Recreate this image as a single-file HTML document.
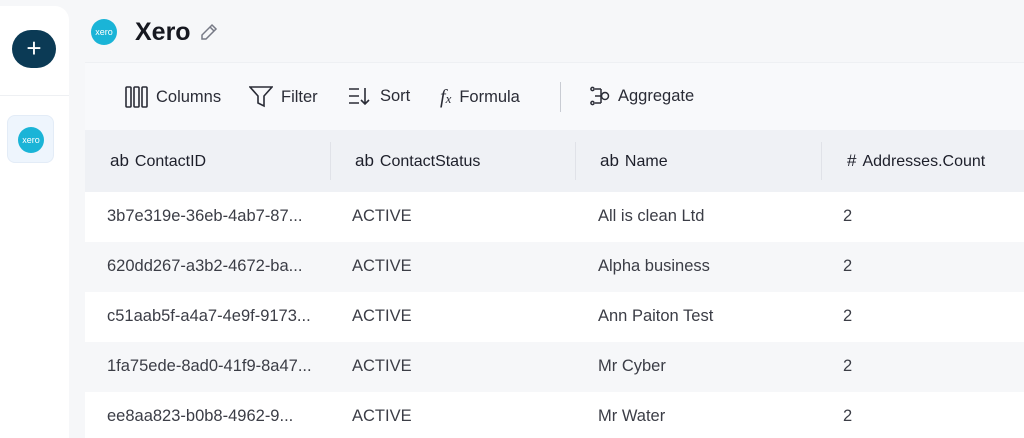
<!DOCTYPE html>
<html><head><meta charset="utf-8"><style>
*{margin:0;padding:0;box-sizing:border-box}
html,body{width:1024px;height:438px;overflow:hidden}
body{background:#f6f7f9;font-family:"Liberation Sans",sans-serif;position:relative;color:#1d1f2a}
.side{position:absolute;left:0;top:6px;width:69px;height:440px;background:#fff;border-radius:0 14px 0 0}
.plus{position:absolute;left:12px;top:24px;width:44px;height:38px;border-radius:19px;background:#0b3a55;color:#fff;font-size:26px;text-align:center;line-height:36px}
.sep{position:absolute;left:0;top:89px;width:69px;height:1px;background:#eef0f3}
.tile{position:absolute;left:7px;top:109px;width:47px;height:48px;border-radius:8px;background:#eef5fd;border:1px solid #e3ecf7}
.xl{border-radius:50%;background:#1ab4d7;color:#fff;text-align:center;font-size:9px;line-height:26px}
.title{position:absolute;left:135px;top:18px;font-size:25px;font-weight:bold;color:#161820}
.tb{position:absolute;left:85px;top:62px;right:0;height:68px;background:#f8f9fb;border-top:1px solid #eef0f3}
.tbi{position:absolute;top:23px;font-size:16.5px;color:#2a2c36;display:flex;align-items:center;gap:8px}
.hd{position:absolute;left:85px;top:130px;right:0;height:62px;background:#eff1f5}
.hc{position:absolute;top:21px;font-size:16px;color:#1d1f2a}
.hc b{font-weight:normal;font-size:17px;margin-right:6px}
.vl{position:absolute;top:12px;width:1px;height:38px;background:#e0e2e8}
.row{position:absolute;left:85px;right:0;height:50px;font-size:16.5px;color:#3b3d46}
.row span{position:absolute;top:15px}
</style></head><body>
<div class="side"><div class="plus">+</div><div class="sep"></div><div class="tile"><div class="xl" style="position:absolute;left:10px;top:11px;width:26px;height:26px">xero</div></div></div>
<div class="xl" style="position:absolute;left:91px;top:19px;width:26px;height:26px">xero</div>
<div class="title">Xero</div>
<svg style="position:absolute;left:199px;top:22px" width="20" height="20" viewBox="0 0 20 20" fill="none" stroke="#777a86" stroke-width="1.5"><path d="M13 3l4 4L7 17H3v-4z"/><path d="M11 5l4 4"/></svg>
<div class="tb">
<div class="tbi" style="left:40px"><svg width="23" height="22" viewBox="0 0 23 22" fill="none" stroke="#2a2c36" stroke-width="1.6"><rect x="1" y="1" width="5" height="20" rx="1"/><rect x="9" y="1" width="5" height="20" rx="1"/><rect x="17" y="1" width="5" height="20" rx="1"/></svg>Columns</div>
<div class="tbi" style="left:164px"><svg width="24" height="22" viewBox="0 0 24 22" fill="none" stroke="#2a2c36" stroke-width="1.6"><path d="M1 1h22l-8 9v10l-6-3v-7z"/></svg>Filter</div>
<div class="tbi" style="left:263px"><svg width="24" height="20" viewBox="0 0 24 20" fill="none" stroke="#2a2c36" stroke-width="1.6"><path d="M1 3h10M1 10h10M1 17h10M17 2v16M13 14l4 4 4-4"/></svg>Sort</div>
<div class="tbi" style="left:355px"><span style="font-family:'Liberation Serif',serif;font-style:italic;font-size:20px">f<span style="font-size:13px">x</span></span>Formula</div>
<div style="position:absolute;left:475px;top:19px;width:1px;height:30px;background:#c9ccd3"></div>
<div class="tbi" style="left:505px"><svg width="20" height="20" viewBox="0 0 20 20" fill="none" stroke="#2a2c36" stroke-width="1.5"><circle cx="2.5" cy="3" r="1.6"/><circle cx="2.5" cy="17" r="1.6"/><path d="M5 3h6M5 10h7M5 17h6M11 3v14"/><circle cx="15" cy="10" r="3.5"/></svg>Aggregate</div>
</div>
<div class="hd">
<div class="hc" style="left:25px"><b>ab</b>ContactID</div><div class="vl" style="left:245px"></div>
<div class="hc" style="left:270px"><b>ab</b>ContactStatus</div><div class="vl" style="left:490px"></div>
<div class="hc" style="left:515px"><b>ab</b>Name</div><div class="vl" style="left:736px"></div>
<div class="hc" style="left:762px"><b>#</b>Addresses.Count</div>
</div>
<div class="row" style="top:192px;background:#fff"><span style="left:22px">3b7e319e-36eb-4ab7-87...</span><span style="left:267px">ACTIVE</span><span style="left:513px">All is clean Ltd</span><span style="left:758px">2</span></div>
<div class="row" style="top:242px;background:#f6f7f9"><span style="left:22px">620dd267-a3b2-4672-ba...</span><span style="left:267px">ACTIVE</span><span style="left:513px">Alpha business</span><span style="left:758px">2</span></div>
<div class="row" style="top:292px;background:#fff"><span style="left:22px">c51aab5f-a4a7-4e9f-9173...</span><span style="left:267px">ACTIVE</span><span style="left:513px">Ann Paiton Test</span><span style="left:758px">2</span></div>
<div class="row" style="top:342px;background:#f6f7f9"><span style="left:22px">1fa75ede-8ad0-41f9-8a47...</span><span style="left:267px">ACTIVE</span><span style="left:513px">Mr Cyber</span><span style="left:758px">2</span></div>
<div class="row" style="top:392px;background:#fff"><span style="left:22px">ee8aa823-b0b8-4962-9...</span><span style="left:267px">ACTIVE</span><span style="left:513px">Mr Water</span><span style="left:758px">2</span></div>
</body></html>
